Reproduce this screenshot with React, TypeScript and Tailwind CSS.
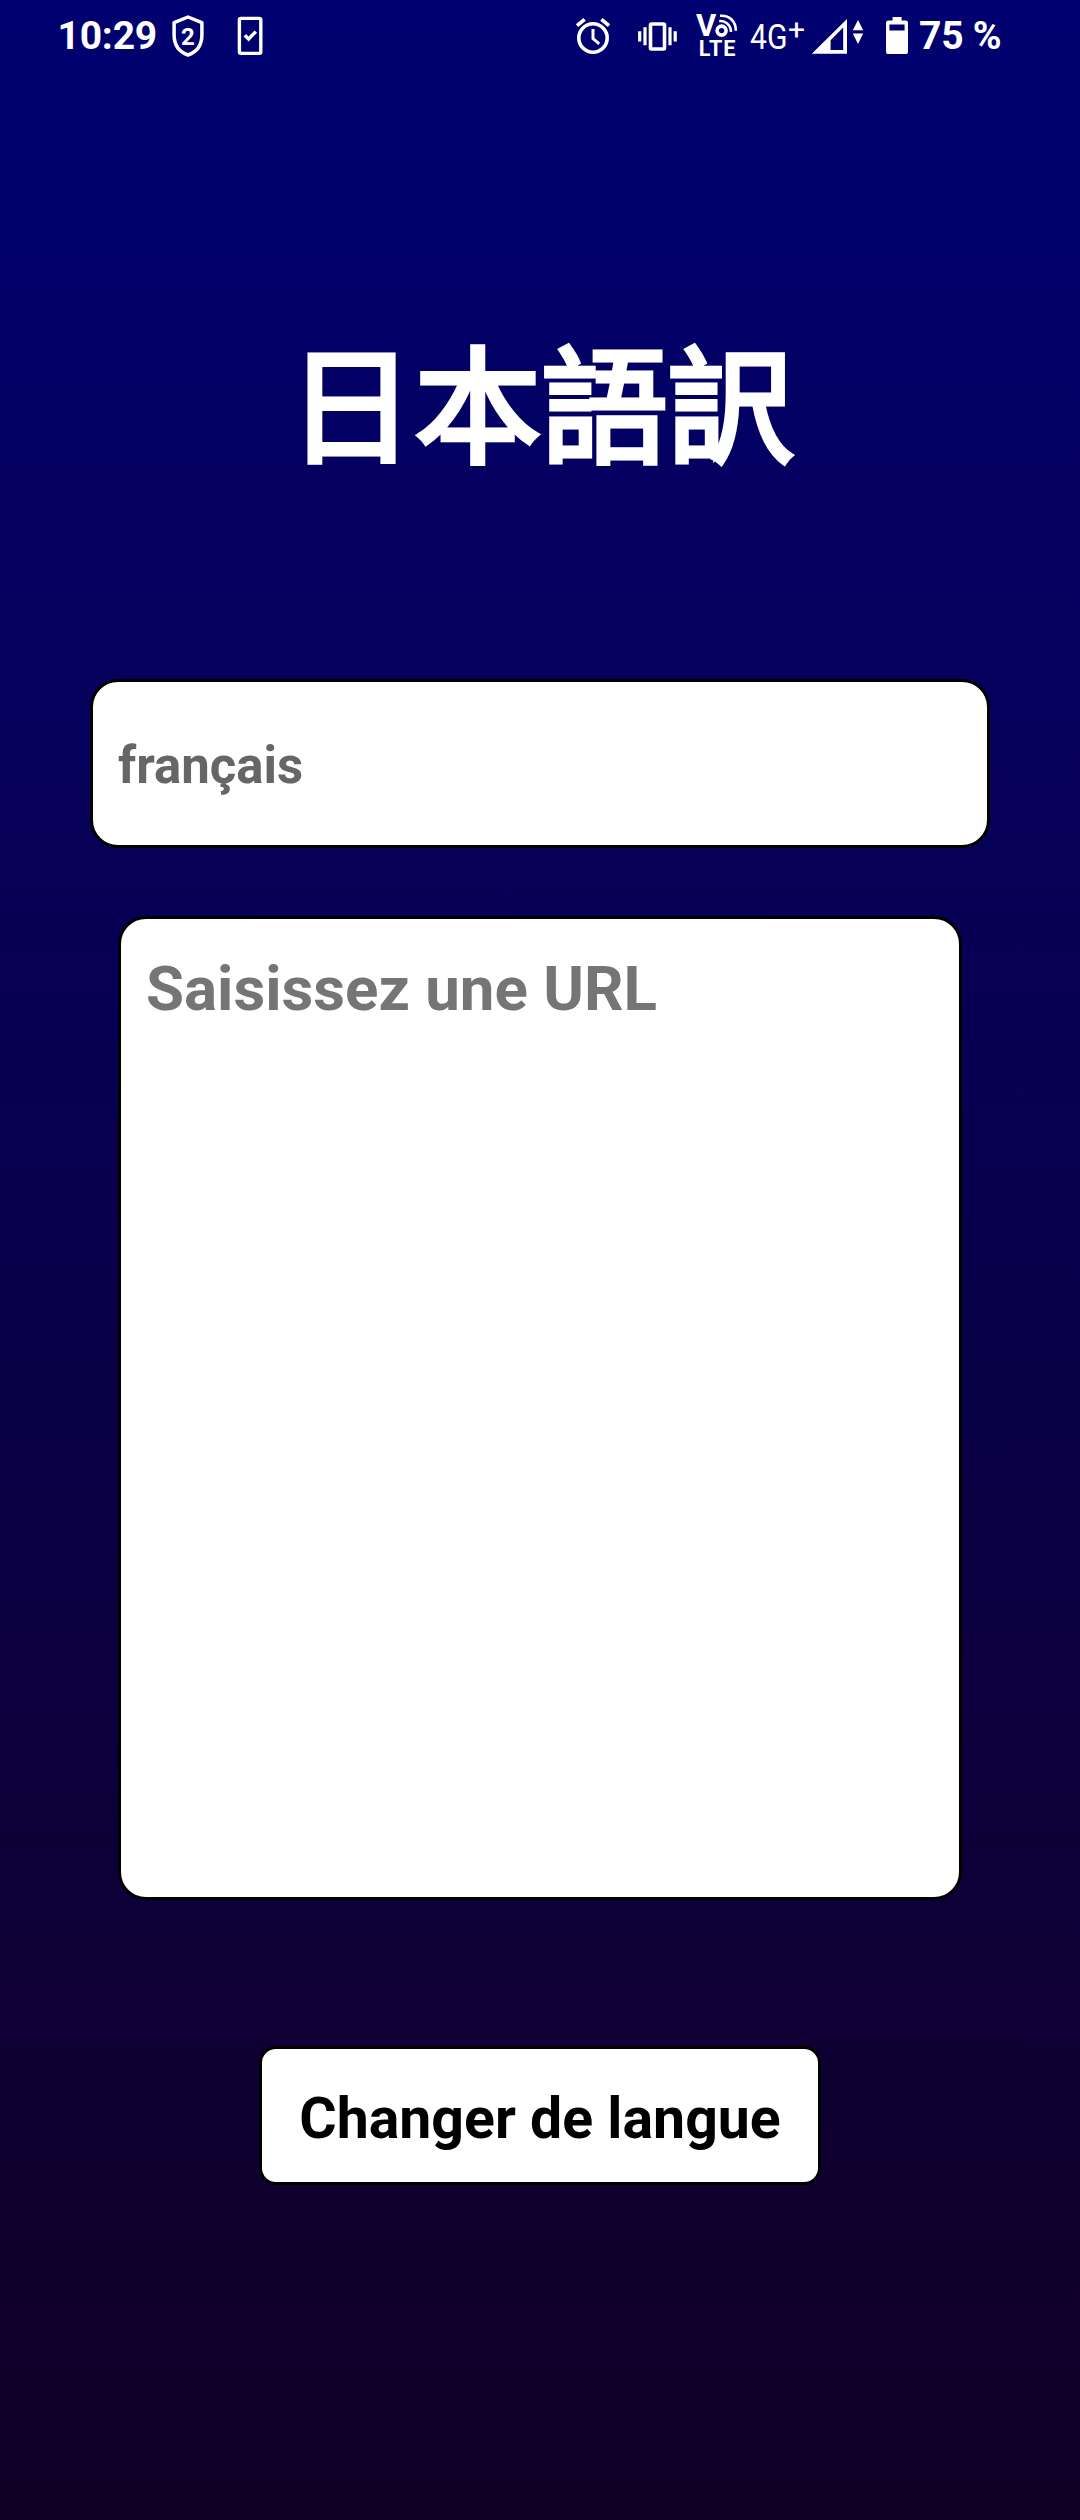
function ShieldIcon() {
  return (
    <svg className="h-[72px] w-10 shrink-0" viewBox="168 0 40 72" fill="none">
      <path d="M188 17 L201.9 22.6 V35 C201.9 45 196.5 52 188 55 C179.5 52 174.1 45 174.1 35 V22.6 Z" stroke="white" strokeWidth="3.5" strokeLinejoin="round" />
      <text x="188" y="44.8" textAnchor="middle" fill="white" fontFamily="Roboto, sans-serif" fontWeight="700" fontSize="24">2</text>
    </svg>
  );
}

function PhoneCheckIcon() {
  return (
    <svg className="ml-[26px] h-[72px] w-8 shrink-0" viewBox="234 0 32 72" fill="none" stroke="white">
      <rect x="239.4" y="18.4" width="21.4" height="35" rx="1.6" strokeWidth="3.4" />
      <path d="M244.8 35.2 L248.6 39 L255.8 31.6" strokeWidth="3.4" />
    </svg>
  );
}

function AlarmIcon() {
  return (
    <svg className="h-[72px] w-[42px] shrink-0" viewBox="572 0 42 72" fill="none" stroke="white">
      <circle cx="593" cy="38" r="14.2" strokeWidth="3.6" />
      <path d="M593 29 V38.6 L599.2 43.8" strokeWidth="3" />
      <path d="M577 25.6 L584.6 19.3 M601.4 19.3 L609 25.6" strokeWidth="3.7" />
    </svg>
  );
}

function VibrateIcon() {
  return (
    <svg className="ml-5 h-[72px] w-[46px] shrink-0" viewBox="634 0 46 72" fill="none" stroke="white">
      <rect x="650.5" y="24" width="14" height="25" rx="1" strokeWidth="3.6" />
      <path d="M645 27.2 V45.2 M670 27.2 V45.2" strokeWidth="3.2" />
      <path d="M639.7 31.2 V41.6 M675.2 31.2 V41.6" strokeWidth="3.2" />
    </svg>
  );
}

function VoLteIcon() {
  return (
    <svg className="ml-3 h-[72px] w-12 shrink-0" viewBox="692 0 48 72" fill="none">
      <text x="696" y="36" fill="white" fontFamily="Roboto, sans-serif" fontWeight="700" fontSize="31">V</text>
      <circle cx="721.6" cy="30.6" r="4.5" stroke="white" strokeWidth="3.6" />
      <path d="M719.2 21.2 C725 20.2 730.8 24.8 731 32 M720 15.8 C729.5 15 736 21.5 735.8 30.8" stroke="white" strokeWidth="2.6" />
      <text x="698.8" y="56.4" fill="white" fontFamily="Roboto, sans-serif" fontWeight="700" fontSize="21.6" textLength="36.5">LTE</text>
    </svg>
  );
}

function SignalIcon() {
  return (
    <svg className="h-[72px] w-[58px] shrink-0" viewBox="808 0 58 72" fill="white">
      <path fillRule="evenodd" d="M811.8 53.8 L847 19 V53.8 Z M830.6 40.2 V50 H843.2 V27.6 Z" />
      <path d="M858 20 L863.2 30.2 H852.8 Z M852.8 33.4 H863.2 L858 44 Z" />
    </svg>
  );
}

function BatteryIcon() {
  return (
    <svg className="ml-4 h-[72px] w-[30px] shrink-0" viewBox="882 0 30 72" fill="white">
      <path fillRule="evenodd" d="M892.6 17 H901.6 V20.6 H905.6 Q908 20.6 908 23 V51.4 Q908 54 905.6 54 H888.4 Q886 54 886 51.4 V23 Q886 20.6 888.4 20.6 H892.6 Z M889.4 24.6 V30.6 H904.6 V24.6 Z" />
    </svg>
  );
}

function StatusBar() {
  return (
    <div className="flex h-[72px] w-full items-start text-[39px] leading-[72px] font-bold text-white">
      <span className="ml-[57.5px] w-[110.5px] shrink-0 tracking-[-0.2px] whitespace-nowrap">10:29</span>
      <ShieldIcon />
      <PhoneCheckIcon />
      <div className="grow" />
      <AlarmIcon />
      <VibrateIcon />
      <VoLteIcon />
      <div className="ml-2.5 flex w-[58px] shrink-0 font-normal">
        <span className="w-[38px] origin-left scale-x-[0.86] text-[35px] leading-[75px]">4G</span>
        <span className="text-[30px] leading-[60px]">+</span>
      </div>
      <SignalIcon />
      <BatteryIcon />
      <span className="ml-[7px] w-[161px] shrink-0 tracking-[-0.2px] whitespace-nowrap">75 %</span>
    </div>
  );
}

export default function App() {
  return (
    <div className="flex h-[2520px] w-[1080px] flex-col items-center overflow-hidden bg-[linear-gradient(to_bottom,#000070,#120026)] font-[Roboto,sans-serif]">
      <StatusBar />
      <h1 className="mt-[234px] h-[184px] pl-0.5 font-['Noto_Sans_CJK_SC',sans-serif] text-[126.6px] leading-[184px] font-normal whitespace-nowrap text-white [-webkit-text-stroke:5px_white]">
        日本語訳
      </h1>
      <div className="mt-[189px] flex h-[169px] w-[900px] items-center rounded-[28px] border-3 border-black bg-white pt-[6px] pl-[25px] text-[50.9px] font-bold text-[#666666]">
        français
      </div>
      <textarea
        className="mt-[68px] block h-[984px] w-[844px] resize-none rounded-[28px] border-3 border-black bg-white px-[25px] pt-[33px] text-[61.8px] leading-[74px] font-bold outline-none placeholder:text-[#757575] placeholder:opacity-100"
        placeholder="Saisissez une URL"
      />
      <button className="mt-[146px] flex h-[139px] w-[562px] items-center justify-center rounded-[17px] border-3 border-black bg-white pt-[6px] text-[57.2px] font-bold whitespace-nowrap text-black">
        Changer de langue
      </button>
    </div>
  );
}
